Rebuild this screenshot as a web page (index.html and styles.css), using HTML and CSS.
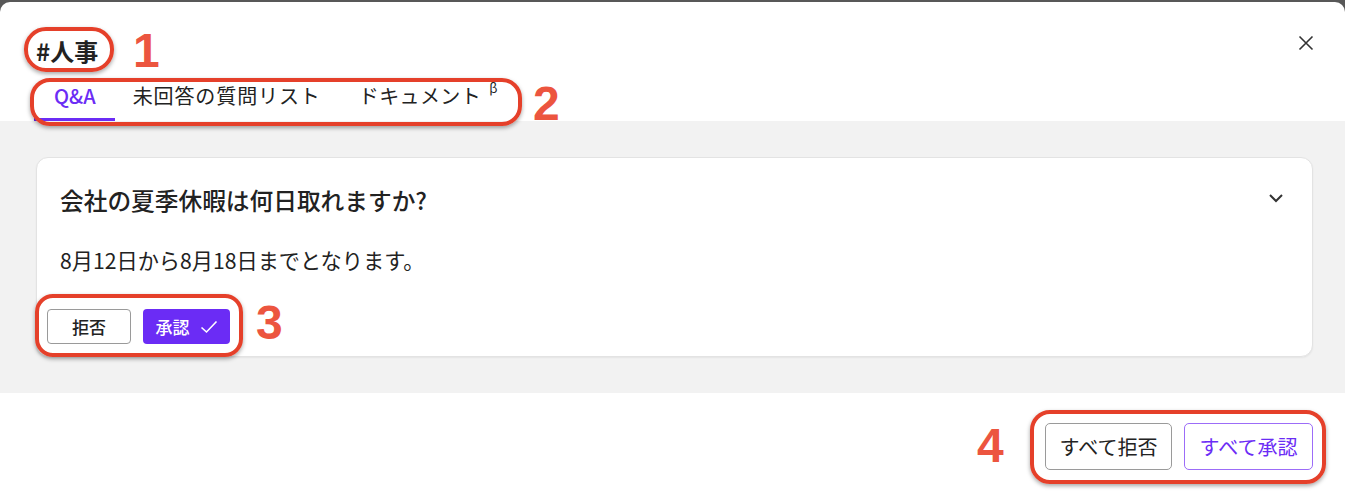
FILE: index.html
```html
<!DOCTYPE html>
<html lang="ja">
<head>
<meta charset="utf-8">
<title>#人事</title>
<link rel="stylesheet" href="styles.css">
</head>
<body>
<div class="modal">
  <header class="modal-header">
    <div class="title-row">
      <h1 class="title">#人事</h1>
      <button class="close" aria-label="閉じる">
        <svg width="16" height="16" viewBox="0 0 16 16"><path d="M1.5 1.5 L14.5 14.5 M14.5 1.5 L1.5 14.5" stroke="#333" stroke-width="1.6" fill="none"/></svg>
      </button>
    </div>
    <nav class="tabs">
      <div class="tab active">Q&amp;A</div>
      <div class="tab">未回答の質問リスト</div>
      <div class="tab">ドキュメント<sup class="beta">β</sup></div>
    </nav>
  </header>
  <main class="modal-body">
    <section class="card">
      <div class="q-row">
        <div class="question">会社の夏季休暇は何日取れますか?</div>
        <svg class="chevron" width="16" height="10" viewBox="0 0 16 10"><path d="M2 2 L8 8 L14 2" stroke="#333" stroke-width="2" fill="none"/></svg>
      </div>
      <div class="answer">8月12日から8月18日までとなります。</div>
      <div class="actions">
        <button class="btn btn-reject">拒否</button>
        <button class="btn btn-approve">承認<svg width="18" height="14" viewBox="0 0 18 14"><path d="M1.5 7.5 L6.5 12 L16.5 1.5" stroke="#fff" stroke-width="1.6" fill="none"/></svg></button>
      </div>
    </section>
  </main>
  <footer class="modal-footer">
    <button class="fbtn fbtn-reject">すべて拒否</button>
    <button class="fbtn fbtn-approve">すべて承認</button>
  </footer>
</div>

<div class="ann ann-box ann-1"></div>
<div class="ann ann-num num-1">1</div>
<div class="ann ann-box ann-2"></div>
<div class="ann ann-num num-2">2</div>
<div class="ann ann-box ann-3"></div>
<div class="ann ann-num num-3">3</div>
<div class="ann ann-box ann-4"></div>
<div class="ann ann-num num-4">4</div>
</body>
</html>
```
FILE: styles.css
```css
* { box-sizing: border-box; }
html, body { margin: 0; padding: 0; }
body {
  background: #585858;
  padding-top: 2px;
  font-family: "Noto Sans CJK JP", "Noto Sans", sans-serif;
  color: #222;
  width: 1345px;
  height: 493px;
  overflow: hidden;
  position: relative;
}
.modal {
  background: #fff;
  border-radius: 10px 10px 0 0;
  height: 491px;
  display: flex;
  flex-direction: column;
}
.modal-header {
  padding-top: 34px;
}
.title-row {
  display: flex;
  justify-content: space-between;
  align-items: flex-start;
  padding: 0 31px 0 36px;
}
.title {
  margin: 0;
  font-size: 24px;
  line-height: 30px;
  font-weight: 700;
  color: #222;
}
.close {
  border: 0;
  background: none;
  padding: 0;
  width: 16px;
  height: 16px;
  margin-top: -1px;
  display: flex;
}
.tabs {
  display: flex;
  padding-left: 34px;
  margin-top: 16px;
}
.tab {
  font-size: 20px;
  line-height: 28px;
  padding: 0 19px 8px;
  border-bottom: 3px solid transparent;
  color: #222;
  letter-spacing: 0.9px;
  font-weight: 400;
}
.tab.active {
  color: #6b2cf5;
  border-bottom-color: #6b2cf5;
  font-weight: 500;
  padding: 0 19px 8px 20px;
  letter-spacing: 0;
}
.tab:nth-child(2) { padding-left: 18px; }
.tab:nth-child(3) { padding-left: 19px; letter-spacing: 0.4px; }
.beta {
  font-size: 13px;
  font-weight: 400;
  vertical-align: top;
  line-height: 1;
  margin-left: 8px;
  position: relative;
  top: -1px;
}
.modal-body {
  background: #f2f2f2;
  padding: 36px 32px 36px 36px;
}
.card {
  background: #fff;
  border: 1px solid #e3e3e3;
  border-radius: 12px;
  box-shadow: 0 1px 2px rgba(0,0,0,0.06);
  height: 200px;
}
.q-row {
  display: flex;
  justify-content: space-between;
  align-items: center;
  padding: 26px 28px 0 23px;
}
.question {
  font-size: 23.7px;
  line-height: 32px;
  font-weight: 500;
  color: #222;
}
.chevron { margin-top: -4px; }
.answer {
  font-size: 21.2px;
  line-height: 28px;
  padding: 30px 23px 0;
  color: #222;
}
.actions {
  display: flex;
  gap: 12px;
  padding: 35px 10px 0;
}
.btn {
  height: 35px;
  font-family: inherit;
  font-size: 17px;
  border-radius: 4px;
  display: flex;
  align-items: center;
  justify-content: center;
  padding: 0;
}
.btn-reject {
  width: 84px;
  background: #fff;
  border: 1px solid #9a9a9a;
  color: #222;
  font-weight: 500;
}
.btn-approve {
  width: 87px;
  background: #6b2cf5;
  border: 0;
  color: #fff;
  gap: 10px;
  font-weight: 500;
}
.modal-footer {
  flex: 1;
  display: flex;
  justify-content: flex-end;
  align-items: flex-start;
  gap: 12px;
  padding: 30px 32px 0 0;
}
.fbtn {
  height: 47px;
  font-family: inherit;
  font-size: 20px;
  background: #fff;
  border-radius: 5px;
  padding: 0;
}
.fbtn-reject {
  width: 127px;
  border: 1px solid #9a9a9a;
  color: #222;
}
.fbtn-approve {
  width: 129px;
  border: 1px solid #9c6cf8;
  color: #6b2cf5;
}

/* annotation overlay */
.ann { position: absolute; }
.ann-box {
  border: 4px solid #e5402a;
  box-shadow: 0 2px 4px rgba(0,0,0,0.35);
}
.ann-1 { left: 24px; top: 27px; width: 90px; height: 45px; border-radius: 22px; }
.ann-2 { left: 30px; top: 78px; width: 492px; height: 48px; border-radius: 20px; }
.ann-3 { left: 35px; top: 294px; width: 208px; height: 63px; border-radius: 18px; }
.ann-4 { left: 1030px; top: 410px; width: 296px; height: 74px; border-radius: 20px; }
.ann-num {
  font-family: "Liberation Sans", Arial, sans-serif;
  font-weight: 700;
  font-size: 48px;
  line-height: 1;
  color: #ec553f;
}
.num-1 { left: 133px; top: 27px; }
.num-2 { left: 533px; top: 80px; }
.num-3 { left: 256px; top: 299px; }
.num-4 { left: 977px; top: 422px; }
```
